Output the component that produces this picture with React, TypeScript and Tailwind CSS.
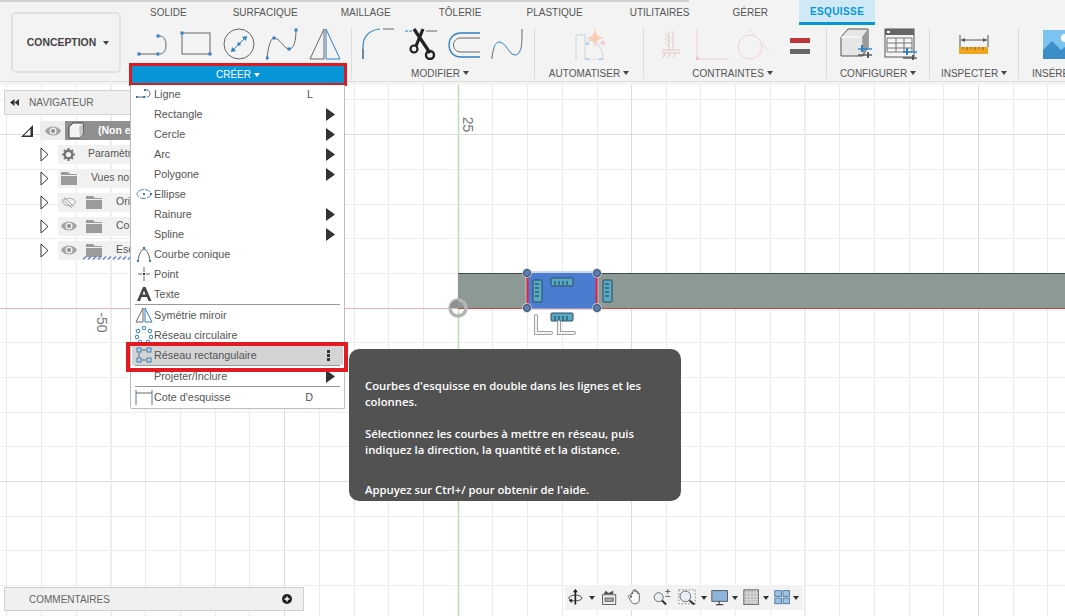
import React from "react";

const B = "#2f7fc6";
const G = "#666";
const font = { fontFamily: '"Liberation Sans", Arial, sans-serif' };

function Caret({ color = "#444" }: { color?: string }) {
  return (
    <svg width="6" height="4" viewBox="0 0 6 4" className="shrink-0">
      <path d="M0 0h6L3 4z" fill={color} />
    </svg>
  );
}

const Dot = ({ x, y, s = 3 }: { x: number; y: number; s?: number }) => <rect x={x - s / 2} y={y - s / 2} width={s} height={s} fill={B} />;

function Ico({ w = 32, h = 32, children }: { w?: number; h?: number; children: React.ReactNode }) {
  return (
    <svg width={w} height={h} viewBox={`0 0 ${w} ${h}`} className="shrink-0" fill="none">
      {children}
    </svg>
  );
}

const LineIcon = () => (
  <Ico>
    <path d="M2 26h20" stroke={G} />
    <path d="M20 8h3c8 0 8 18 0 18" stroke={G} />
    <Dot x={2} y={26} /><Dot x={21} y={26} /><Dot x={21} y={8} />
  </Ico>
);
const RectIcon = () => (
  <Ico>
    <rect x="2" y="5" width="28" height="21" stroke={G} />
    <Dot x={2} y={5} /><Dot x={30} y={26} />
  </Ico>
);
const CircleIcon = () => (
  <Ico>
    <circle cx="16" cy="16" r="15" stroke={G} />
    <path d="M8 24L24 8" stroke={B} />
    <path d="M24 8l-5 1 4 4zM8 24l5-1-4-4z" fill={B} />
    <Dot x={16} y={16} />
  </Ico>
);
const SplineIcon = () => (
  <Ico>
    <path d="M1 31C2 18 5 10 8 10c6 0 10 11 15 11 5 0 7-8 7-20" stroke={G} />
    <Dot x={1} y={30} /><Dot x={8} y={10} /><Dot x={23} y={21} /><Dot x={30} y={2} />
  </Ico>
);
const MirrorIcon = () => (
  <Ico>
    <path d="M15 1v30H1z" stroke={G} />
    <path d="M17 1v30h14z" stroke={B} />
  </Ico>
);
const FilletIcon = () => (
  <Ico w={33}>
    <path d="M1 31V18C1 8 8 2 18 1" stroke={B} strokeWidth="1.2" />
    <path d="M21 1h11M1 21v10" stroke={G} />
  </Ico>
);
const ScissorsIcon = () => (
  <Ico w={33}>
    <path d="M0 3h8" stroke={B} strokeDasharray="3 1" />
    <path d="M21 3h11" stroke={G} />
    <path d="M9 1L25 25" stroke="#222" strokeWidth="3.200" />
    <path d="M18 1L11 18" stroke="#222" strokeWidth="3.200" />
    <circle cx="9" cy="21" r="3.500" stroke="#222" strokeWidth="2.200" />
    <circle cx="25" cy="27" r="4" stroke="#222" strokeWidth="2.400" />
  </Ico>
);
const SlotIcon = () => (
  <Ico w={33}>
    <path d="M32 5H13C-3 5-3 29 13 29h19" stroke={B} strokeWidth="1.3" />
    <path d="M32 10H13C3 10 3 24 13 24h19" stroke={G} />
  </Ico>
);
const CurveIcon = () => (
  <Ico w={33}>
    <path d="M1 31c0-4 1-8 2-11" stroke={G} />
    <path d="M30 20c1-4 1-10 1-19" stroke={G} />
    <path d="M3 20c1-4 3-6 5-6 7 0 10 13 16 13 3 0 5-3 6-7" stroke={B} />
  </Ico>
);
const AutoIcon = () => (
  <Ico w={34}>
    <path d="M3 7v26M12 7v26M3 7h10M12 32h20M15 12c8 0 15 8 15 19" stroke="#c4d6e4" />
    <rect x="13" y="14" width="3" height="3" fill="#b8d0e4" /><rect x="13" y="30" width="3" height="3" fill="#b8d0e4" /><rect x="26" y="30" width="3" height="3" fill="#b8d0e4" />
    <path d="M22 0c1 7 3 9 9 10-6 1-8 3-9 9-1-6-3-8-9-9 6-1 8-3 9-10z" fill="#f7cdb4" />
    <path d="M30 11c.5 3 1.500 4 4 4-3 .5-3.500 1.500-4 4-.5-3-1.500-3.500-4-4 3-.5 3.500-1.500 4-4z" fill="#f3c8d0" />
  </Ico>
);
const ConIcon1 = () => (
  <Ico w={20}>
    <path d="M8 3v18M12 3v18" stroke="#e4c8c8" />
    <path d="M4 6l5 5M4 10l5 5M4 14l5 5" stroke="#e6c6bc" />
    <path d="M1 22h18M1 25h18" stroke="#e6c2bc" />
    <path d="M4 26l-2 4M9 26l-2 4M14 26l-2 4" stroke="#e6c2bc" />
  </Ico>
);
const ConIcon2 = () => (
  <Ico w={34}>
    <path d="M2 1v30h32" stroke="#ecd0d0" />
    <rect x="1" y="29" width="3" height="3" fill="#edc4c4" />
  </Ico>
);
const ConIcon3 = () => (
  <Ico w={34}>
    <circle cx="13" cy="19" r="12" stroke="#ecd4d0" />
    <path d="M12 1l20 22" stroke="#e8dcdc" />
  </Ico>
);
const EqualIcon = () => (
  <div className="flex w-[20px] flex-col gap-[6px] self-start pt-[13px]">
    <div className="h-[5px] bg-[#bf3437]" />
    <div className="h-[5px] bg-[#666]" />
  </div>
);
const Plus = ({ x, y }: { x: number; y: number }) => (
  <g transform={`translate(${x} ${y})`}>
    <path d="M0 4h14" stroke="#2f7fc6" strokeWidth="1.4" />
    <path d="M4 0v7" stroke="#2f7fc6" strokeWidth="2" />
    <path d="M0 10h14" stroke="#555" strokeWidth="1.4" />
    <path d="M10 7v6" stroke="#555" strokeWidth="2" />
  </g>
);
const BoxIcon = () => (
  <Ico w={33}>
    <path d="M1 9l7-8h20v18l-5 9H1z" fill="#e6e6e6" stroke="#555" />
    <path d="M22 9l6-8v18l-5 9z" fill="#9a9a9a" />
    <path d="M1 9h21" stroke="#fff" />
    <Plus x={18} y={17} />
  </Ico>
);
const TableIcon = () => (
  <Ico w={33}>
    <rect x="1" y="1" width="29" height="28" fill="#f5f5f5" stroke="#555" />
    <rect x="1" y="1" width="29" height="6" fill="#666" />
    <rect x="3" y="3" width="3" height="2" fill="#fff" />
    <path d="M3 10h25v14H3zM3 15h25M3 20h25M12 10v14M20 10v14" stroke="#777" />
    <Plus x={19} y={20} />
  </Ico>
);
const RulerIcon = () => (
  <Ico w={30} h={24}>
    <path d="M1 3v12M29 3v12" stroke="#555" />
    <path d="M2 8h26" stroke="#555" />
    <path d="M2 8l4-2v4zM28 8l-4-2v4z" fill="#555" />
    <rect x="0" y="15" width="29" height="7" fill="#efa51e" />
    <path d="M4 15v2M8 15v3M12 15v2M16 15v3M20 15v2M24 15v3" stroke="#8a6510" />
  </Ico>
);
const ImageIcon = () => (
  <Ico w={34}>
    <rect x="0" y="2" width="34" height="29" fill="#7dc3f0" />
    <circle cx="22" cy="10" r="4" fill="#fff" />
    <path d="M0 22l9-9 9 9 8-6 8 6v9H0z" fill="#3d8fc9" />
  </Ico>
);

function Sep() {
  return <div className="mt-[3px] mb-[5px] w-px shrink-0 bg-[#dcdcdc]" />;
}

function Group({ label, w, pad, gap, lab = "", children }: { label: string; w: string; pad: string; gap: string; lab?: string; children: React.ReactNode }) {
  return (
    <div className={`flex shrink-0 flex-col ${w}`}>
      <div className={`flex h-[37px] items-center ${pad} ${gap}`}>{children}</div>
      <div className={`flex h-[22px] items-center justify-center gap-[3px] text-[10px] text-[#555] ${lab}`}>
        {label}
        <Caret />
      </div>
    </div>
  );
}

const tabs = [
  { t: "SOLIDE", m: "ml-[-2px]" },
  { t: "SURFACIQUE", m: "" },
  { t: "MAILLAGE", m: "ml-[-3px]" },
  { t: "TÔLERIE", m: "ml-[2px]" },
  { t: "PLASTIQUE", m: "ml-[-1px]" },
  { t: "UTILITAIRES", m: "ml-[1px]" },
  { t: "GÉRER", m: "ml-[-3px]" },
];

function Toolbar() {
  return (
    <div className="relative flex h-[85px] shrink-0 items-start border-b-[3px] border-b-[#f4f4f4] bg-[#f3f3f3] shadow-[inset_0_-1px_0_#dedede]">
      <div className="absolute top-0 left-0 h-[2px] w-[689px] bg-[#cfcfcf]" />
      <div className="mt-[12px] ml-[11px] flex h-[61px] w-[110px] shrink-0 items-center justify-center gap-[7px] rounded-[5px] border-2 border-[#e1e1e1] pl-[4px] text-[10.4px] font-bold text-[#444]">
        CONCEPTION
        <Caret />
      </div>
      <div className="ml-[8px] flex flex-col">
        <div className="flex h-[25px]">
          {tabs.map(({ t, m }) => (
            <div key={t} className={`flex h-[24px] items-center px-[23px] text-[10px] text-[#555] ${m}`}>
              {t}
            </div>
          ))}
          <div className="ml-[8px] flex h-[25px] w-[76px] items-center justify-center border-b-[3px] border-b-[#0696d7] bg-[#cfe9f6] text-[10px] font-bold tracking-[0.4px] text-[#0696d7]">
            ESQUISSE
          </div>
        </div>
        <div className="flex h-[59px]">
          <div className="relative flex w-[218px] shrink-0 flex-col">
            <div className="flex h-[38px] shrink-0 items-center gap-[11px] pl-[8px]">
              <LineIcon /><RectIcon /><CircleIcon /><SplineIcon /><MirrorIcon />
            </div>
            <div className="flex h-[23px] shrink-0 items-center justify-center gap-[3px] border-[3px] border-[#dc1a21] bg-[#0696d7] text-[10px] text-white">
              CRÉER
              <Caret color="#fff" />
            </div>
          </div>
          <div className="ml-[4px] flex">
            <Sep />
            <Group label="MODIFIER" w="w-[182px]" pad="pl-[10px]" gap="gap-[10px]" lab="pr-[6px]">
              <FilletIcon /><ScissorsIcon /><SlotIcon /><CurveIcon />
            </Group>
            <Sep />
            <Group label="AUTOMATISER" w="w-[108px]" pad="pl-[38px]" gap="gap-0">
              <AutoIcon />
            </Group>
            <Sep />
            <Group label="CONTRAINTES" w="w-[182px]" pad="pl-[17px]" gap="gap-[14px]" lab="pr-[5px]">
              <ConIcon1 /><ConIcon2 /><div className="-ml-[6px]"><ConIcon3 /></div><div className="ml-[5px] flex h-full"><EqualIcon /></div>
            </Group>
            <Sep />
            <Group label="CONFIGURER" w="w-[102px]" pad="pl-[13px]" gap="gap-[11px]">
              <BoxIcon /><TableIcon />
            </Group>
            <Sep />
            <Group label="INSPECTER" w="w-[88px]" pad="pl-[29px]" gap="gap-0">
              <RulerIcon />
            </Group>
            <Sep />
            <div className="flex w-[46px] flex-col overflow-hidden">
              <div className="flex h-[37px] items-center pl-[24px]"><ImageIcon /></div>
              <div className="flex h-[22px] items-center pl-[13px] text-[10px] whitespace-nowrap text-[#555]">INSÉRER</div>
            </div>
          </div>
        </div>
      </div>
    </div>
  );
}

const vLight = [6, 41, 76, 145, 180, 215, 249, 319, 354, 388, 423, 492, 527, 562, 597, 666, 700, 735, 770, 839, 874, 909, 943, 1013, 1047];
const hLight = [99, 169, 204, 238, 273, 342, 377, 412, 446, 516, 550, 585];

function Canvas() {
  return (
    <svg className="absolute inset-0 h-full w-full" viewBox="0 85 1065 531" fill="none">
      {hLight.map((y) => <path key={y} d={`M0 ${y + 0.5}H1065`} stroke="#eeeeee" />)}
      {vLight.map((x) => <path key={x} d={`M${x + 0.5} 85V616`} stroke="#ebebeb" />)}
      <path d="M0 134.500H1065M0 481.500H1065" stroke="#dddddd" />
      <path d="M111 85V616M805 85V616" stroke="#eeeeee" strokeWidth="2" />
      <path d="M284.500 85V616M631.500 85V616M978.500 85V616" stroke="#dcdcdc" />
      <path d="M0 308.500H458" stroke="#e8b4b4" />
      <path d="M458.500 85V616" stroke="#b8e0b0" strokeWidth="1.500" />
      <rect x="458" y="273" width="607" height="35" fill="#8d9994" />
      <path d="M458 273.500H1065" stroke="#3f4a48" />
      <path d="M458 308.500H1065" stroke="#c94040" />
      <rect x="525" y="271" width="74" height="39" rx="4" fill="#a9c2e8" opacity="0.6" />
      <rect x="527" y="273" width="70" height="35" rx="2" fill="#4a7cd0" />
      <path d="M527.500 274V308M596.500 274V308" stroke="#ee2238" strokeWidth="2" />
      {[[527, 273], [597, 273], [527, 308], [597, 308]].map(([x, y]) => (
        <g key={`${x}${y}`}>
          <circle cx={x} cy={y} r="5" fill="#c9d0da" opacity="0.8" />
          <circle cx={x} cy={y} r="3.500" fill="#5b7fb5" stroke="#3c4a5c" />
        </g>
      ))}
      <circle cx="458" cy="308" r="8" stroke="#b5b5b5" strokeWidth="3.500" />
      <path d="M458 300a8 8 0 0 0-8 8h8z" fill="#8f8f8f" />
      {[[533, 280, 9, 22], [551, 278, 22, 8], [603, 280, 9, 22], [551, 313, 22, 8]].map(([x, y, w, h]) => (
        <g key={`${x}-${y}`}>
          <rect x={x} y={y} width={w} height={h} rx="1" fill="#59a8c4" stroke="#2d4a5a" />
          {w < h
            ? <path d={`M${x + 2} ${y + 4}h4M${x + 2} ${y + 8}h4M${x + 2} ${y + 12}h4M${x + 2} ${y + 16}h4`} stroke="#1d3c4a" />
            : <path d={`M${x + 4} ${y + 3}v4M${x + 8} ${y + 3}v4M${x + 12} ${y + 3}v4M${x + 16} ${y + 3}v4`} stroke="#1d3c4a" />}
        </g>
      ))}
      <path d="M536 316v17h15M559 322v11h15" stroke="#a0a0a0" strokeWidth="4" strokeLinecap="round" />
      <path d="M536 316v17h15M559 322v11h15" stroke="#f4f4f4" strokeWidth="2" strokeLinecap="round" />
    </svg>
  );
}

const Eye = ({ off }: { off?: boolean }) => (
  <svg width="16" height="12" viewBox="0 0 16 12" fill="none" className="shrink-0">
    {off ? (
      <>
        <path d="M1 6c3-5 11-5 14 0-3 5-11 5-14 0z" stroke="#aaa" />
        <path d="M3 1l10 10M1 3l10 9" stroke="#aaa" />
      </>
    ) : (
      <>
        <path d="M0 6c3-6 13-6 16 0-3 6-13 6-16 0z" fill="#a3a3a3" />
        <circle cx="8" cy="6" r="3.500" fill="#eee" />
        <circle cx="8" cy="6" r="2" fill="#8d8d8d" />
      </>
    )}
  </svg>
);
const Folder = () => (
  <svg width="16" height="13" viewBox="0 0 16 13" className="shrink-0">
    <path d="M0 0h7l2 2h7v1H0zM0 4h16v9H0z" fill="#9b9b9b" />
  </svg>
);
const Gear = () => (
  <svg width="13" height="13" viewBox="0 0 13 13" className="shrink-0">
    <circle cx="6.500" cy="6.500" r="3.800" fill="none" stroke="#777" strokeWidth="2.400" />
    <path d="M6.500 0v13M0 6.500h13M2 2l9 9M11 2l-9 9" stroke="#777" strokeWidth="2" strokeDasharray="2 9" />
  </svg>
);
const Tri = () => (
  <svg width="9" height="15" viewBox="0 0 9 15" fill="none" className="shrink-0">
    <path d="M1 1l7 6.500-7 6.500z" fill="#fff" stroke="#333" />
  </svg>
);

function TreeRow({ pl, children, hatch }: { pl: string; children: React.ReactNode; hatch?: boolean }) {
  return (
    <div className="flex h-[24px] items-center pl-[40px]">
      <Tri />
      <div className={`relative ml-[9px] flex h-[19px] w-[80px] shrink-0 items-center overflow-hidden bg-[#f1f1f1] text-[10.5px] whitespace-nowrap text-[#555] ${pl}`}>
        {children}
        {hatch && (
          <svg width="50" height="4" viewBox="0 0 50 4" className="absolute top-[15px] left-[25px]">
            <path d="M0 3.500L3 .5M5 3.500L8 .5M10 3.500L13 .5M15 3.500L18 .5M20 3.500L23 .5M25 3.500L28 .5M30 3.500L33 .5M35 3.500L38 .5M40 3.500L43 .5M45 3.500L48 .5" stroke="#5f86bd" strokeWidth="1.300" />
          </svg>
        )}
      </div>
    </div>
  );
}

function Navigator() {
  return (
    <div className="absolute top-[5px] left-[4px] w-[130px]">
      <div className="flex h-[25px] items-center gap-[10px] border border-[#d2d2d2] bg-[#f0f0f0] pl-[5px] text-[10.2px] text-[#666]">
        <svg width="9" height="7" viewBox="0 0 9 7"><path d="M4.500 0v7L0 3.500zM9 0v7L4.500 3.500z" fill="#333" /></svg>
        NAVIGATEUR
      </div>
      <div className="-ml-[4px] flex h-[26px] items-center pt-[5px] pl-[21px]">
        <svg width="12" height="12" viewBox="0 0 12 12" className="shrink-0"><path d="M12 0v12H0z" fill="#333" /><path d="M9.500 4v6.500H3z" fill="#fff" /></svg>
        <div className="ml-[7px] flex h-[19px] w-[90px] shrink-0 items-center overflow-hidden bg-[#ededed] pl-[5px]">
          <Eye />
          <div className="ml-[4px] flex h-[19px] flex-1 items-center bg-[#8f8f8f] pl-[3px]">
            <svg width="16" height="17" viewBox="0 0 16 17" fill="none" className="shrink-0">
              <path d="M1 5l4-4h10v11l-3 4H1z" fill="#f2f2f2" stroke="#444" />
              <path d="M11 5l4-4v11l-3 4z" fill="#c8c8c8" />
            </svg>
            <span className="ml-[14px] text-[10.5px] font-bold whitespace-nowrap text-white">(Non enregistré)</span>
          </div>
        </div>
      </div>
      <div className="-ml-[4px] pt-[1px]">
        <TreeRow pl="pl-[4px]"><Gear /><span className="ml-[13px]">Paramètres</span></TreeRow>
        <TreeRow pl="pl-[3px]"><Folder /><span className="ml-[14px]">Vues nommées</span></TreeRow>
        <TreeRow pl="pl-[3px]"><Eye off /><div className="ml-[9px]"><Folder /></div><span className="ml-[14px]">Origine</span></TreeRow>
        <TreeRow pl="pl-[3px]"><Eye /><div className="ml-[9px]"><Folder /></div><span className="ml-[14px]">Corps</span></TreeRow>
        <TreeRow pl="pl-[3px]" hatch><Eye /><div className="ml-[9px]"><Folder /></div><span className="ml-[14px]">Esquisses</span></TreeRow>
      </div>
    </div>
  );
}

const MI = ({ children }: { children: React.ReactNode }) => (
  <svg width="18" height="18" viewBox="0 0 18 18" fill="none" className="shrink-0">{children}</svg>
);
const SmDot = ({ x, y }: { x: number; y: number }) => <rect x={x - 1} y={y - 1} width="2" height="2" fill={B} />;

const menuIcons: Record<string, React.ReactNode> = {
  Ligne: <MI><path d="M2 12h9" stroke="#666" /><path d="M10 5h2c4 0 4 7 0 7" stroke="#666" /><SmDot x={2} y={12} /><SmDot x={9} y={12} /><SmDot x={10} y={5} /></MI>,
  Ellipse: <MI><ellipse cx="9" cy="9" rx="7" ry="4.500" stroke="#5a8fc0" strokeDasharray="6 1" /><SmDot x={9} y={9} /><SmDot x={16} y={9} /></MI>,
  "Courbe conique": <MI><path d="M3 16C4 9 6 5 9 4c3 1 5 5 6 12" stroke="#555" /><SmDot x={3} y={16} /><SmDot x={9} y={3} /><SmDot x={15} y={16} /></MI>,
  Point: <MI><path d="M3 9h4M11 9h4M9 2v5M9 11v5" stroke="#666" /><rect x="8" y="8" width="2" height="2" fill="#333" /></MI>,
  Texte: <MI><path d="M2 16L8 2h2.500l6 14h-3l-1.500-4H6.500L5 16zM7.500 9.500h3L9 5.500z" fill="#444" /></MI>,
  "Symétrie miroir": <MI><path d="M8 2v14H1z" stroke="#666" /><path d="M10 2v14h7z" stroke={B} /></MI>,
  "Réseau circulaire": <MI>{[[9, 2], [3, 5], [15, 5], [2, 11], [16, 11], [5, 16], [13, 16]].map(([x, y]) => <circle key={`${x}${y}`} cx={x} cy={y} r="1.800" stroke={B} />)}</MI>,
  "Réseau rectangulaire": <MI><rect x="2" y="2" width="4" height="4" stroke={B} /><rect x="12" y="2" width="4" height="4" stroke={B} /><rect x="2" y="12" width="4" height="4" stroke={B} /><rect x="12" y="12" width="4" height="4" stroke={B} /><path d="M7 4h4M4 7v4M7 14h4" stroke="#666" /></MI>,
  "Cote d'esquisse": <MI><path d="M1 2v15M17 2v15" stroke="#4a7ca8" /><path d="M1 5h16" stroke="#666" /></MI>,
};

function Row({ t, arrow, key2, active }: { t: string; arrow?: boolean; key2?: string; active?: boolean }) {
  return (
    <div className={`flex h-[20px] items-center pl-[3px] ${active ? "bg-[#d4d4d4]" : ""}`}>
      <div className="flex w-[19px] shrink-0 justify-start">{menuIcons[t]}</div>
      <span className="flex-1">{t}</span>
      {key2 && <span className="mr-[30px]">{key2}</span>}
      {arrow && (
        <svg width="9" height="13" viewBox="0 0 9 13" className="mr-[8px]"><path d="M0 0l9 6.500L0 13z" fill="#333" /></svg>
      )}
      {active && (
        <svg width="3" height="11" viewBox="0 0 3 11" className="mr-[13px]"><path d="M0 0h3v3H0zM0 4h3v3H0zM0 8h3v3H0z" fill="#333" /></svg>
      )}
    </div>
  );
}

function Menu() {
  return (
    <div className="absolute top-0 left-[130px] flex h-[324px] w-[215px] flex-col rounded-b-[2px] border border-t-0 border-[#bdbdbd] bg-white px-[1px] text-[10.8px] text-[#555]">
      <div className="-mt-px" />
      <Row t="Ligne" key2="L" />
      <Row t="Rectangle" arrow />
      <Row t="Cercle" arrow />
      <Row t="Arc" arrow />
      <Row t="Polygone" arrow />
      <Row t="Ellipse" />
      <Row t="Rainure" arrow />
      <Row t="Spline" arrow />
      <Row t="Courbe conique" />
      <Row t="Point" />
      <Row t="Texte" />
      <div className="mx-[3px] h-px bg-[#999]" />
      <Row t="Symétrie miroir" />
      <Row t="Réseau circulaire" />
      <div className="relative">
        <Row t="Réseau rectangulaire" active />
        <div className="absolute top-[-3px] right-[-5px] bottom-[-7px] left-[-6px] border-[4px] border-[#e11b22]" />
      </div>
      <div className="mx-[3px] h-px bg-[#999]" />
      <Row t="Projeter/Inclure" arrow />
      <div className="mx-[3px] h-px bg-[#999]" />
      <Row t="Cote d'esquisse" key2="D" />
    </div>
  );
}

function Tooltip() {
  return (
    <div
      className="absolute top-[264px] left-[349px] h-[152px] w-[332px] rounded-[10px] bg-[#525252] pt-[29px] pl-[16px] text-[11.3px] leading-[16px] font-semibold text-white"
      style={{ fontFamily: '"Open Sans", sans-serif' }}
    >
      <p>Courbes d'esquisse en double dans les lignes et les<br />colonnes.</p>
      <p className="mt-[16px]">Sélectionnez les courbes à mettre en réseau, puis<br />indiquez la direction, la quantité et la distance.</p>
      <p className="mt-[24px]">Appuyez sur Ctrl+/ pour obtenir de l'aide.</p>
    </div>
  );
}

function Comments() {
  return (
    <div className="absolute top-[502px] left-[4px] flex h-[24px] w-[300px] items-center justify-between border border-[#cfcfcf] bg-[#f0f0f0] pr-[11px] pl-[24px] text-[10px] text-[#666]">
      COMMENTAIRES
      <svg width="10" height="10" viewBox="0 0 10 10"><circle cx="5" cy="5" r="5" fill="#222" /><path d="M5 2.500v5M2.500 5h5" stroke="#fff" strokeWidth="1.400" /></svg>
    </div>
  );
}

function S({ w, m = "", children }: { w: number; m?: string; children: React.ReactNode }) {
  return (
    <svg width={w * 0.82} height="16.4" viewBox={`0 0 ${w} 20`} fill="none" className={`shrink-0 ${m}`}>{children}</svg>
  );
}

function NavBar() {
  return (
    <div className="absolute top-[500px] left-[565px] flex h-[25px] w-[238px] items-center bg-[#f2f2f2] pl-[3px]">
      <S w={18}><ellipse cx="9" cy="11" rx="8" ry="3.500" stroke="#333" /><path d="M9 1v18" stroke="#222" strokeWidth="2" /><path d="M9 0l-3 4h6zM1 14l4 3v-5z" fill="#222" /></S>
      <div className="ml-[6px]"><Caret color="#333" /></div>
      <S w={20} m="ml-[6px]"><rect x="2" y="7" width="16" height="12" stroke="#444" fill="#eee" /><rect x="5" y="11" width="10" height="4" fill="#aaa" stroke="#555" /><path d="M3 6l3-4 3 3 6-3v4" fill="#555" /></S>
      <S w={20} m="ml-[10px]"><path d="M5 11V6c0-2 2-2 2 0V3c0-2 2-2 2 0v-1c0-2 2-2 2 0v2c0-2 2-2 2 0v2c0-2 2-2 2 0v7c0 3-2 5-5 5H9c-2 0-3-1-4-3L2 10c-1-2 1-3 3-1z" stroke="#444" fill="#fff" /></S>
      <S w={22} m="ml-[9px]"><circle cx="7" cy="10" r="5.500" stroke="#555" fill="#e8f0f6" /><path d="M11 14l5 5" stroke="#333" strokeWidth="2.500" /><path d="M15 3h6M18 0v6M15 9h6" stroke="#444" /></S>
      <S w={23} m="ml-[7px]"><rect x="1" y="1" width="20" height="17" stroke="#777" strokeDasharray="2 2" /><circle cx="9" cy="9" r="6.500" stroke="#555" fill="#e8f0f6" /><path d="M14 14l6 5" stroke="#333" strokeWidth="2.500" /></S>
      <div className="ml-[5px]"><Caret color="#333" /></div>
      <S w={21} m="ml-[4px]"><rect x="1" y="2" width="19" height="13" fill="#8fb4dc" stroke="#444" /><path d="M10 15v3M6 19h9" stroke="#444" strokeWidth="1.500" /></S>
      <div className="ml-[3px]"><Caret color="#333" /></div>
      <S w={20} m="ml-[5px]"><rect x="1" y="1" width="18" height="18" fill="#bcbcbc" stroke="#555" /><path d="M5 1v18M9 1v18M13 1v18M16 1v18M1 5h18M1 9h18M1 13h18M1 16h18" stroke="#eee" strokeWidth=".6" /></S>
      <div className="ml-[4px]"><Caret color="#333" /></div>
      <S w={20} m="ml-[5px]"><rect x="1" y="2" width="8" height="7" fill="#9fc0e0" stroke="#3d6f9e" /><rect x="11" y="2" width="8" height="7" fill="#9fc0e0" stroke="#3d6f9e" /><rect x="1" y="11" width="8" height="7" fill="#9fc0e0" stroke="#3d6f9e" /><rect x="11" y="11" width="8" height="7" fill="#9fc0e0" stroke="#3d6f9e" /></S>
      <div className="ml-[3px]"><Caret color="#333" /></div>
    </div>
  );
}

export default function App() {
  return (
    <div className="relative flex h-[616px] w-[1065px] flex-col overflow-hidden bg-white" style={font}>
      <Toolbar />
      <div className="relative flex-1">
        <Canvas />
        <div className="absolute top-[29px] left-[460px] origin-center rotate-90 text-[14px] text-[#777]">25</div>
        <div className="absolute top-[227px] left-[91px] rotate-90 text-[14px] text-[#777]">-50</div>
        <Navigator />
        <Comments />
        <NavBar />
        <Tooltip />
        <Menu />
      </div>
    </div>
  );
}
